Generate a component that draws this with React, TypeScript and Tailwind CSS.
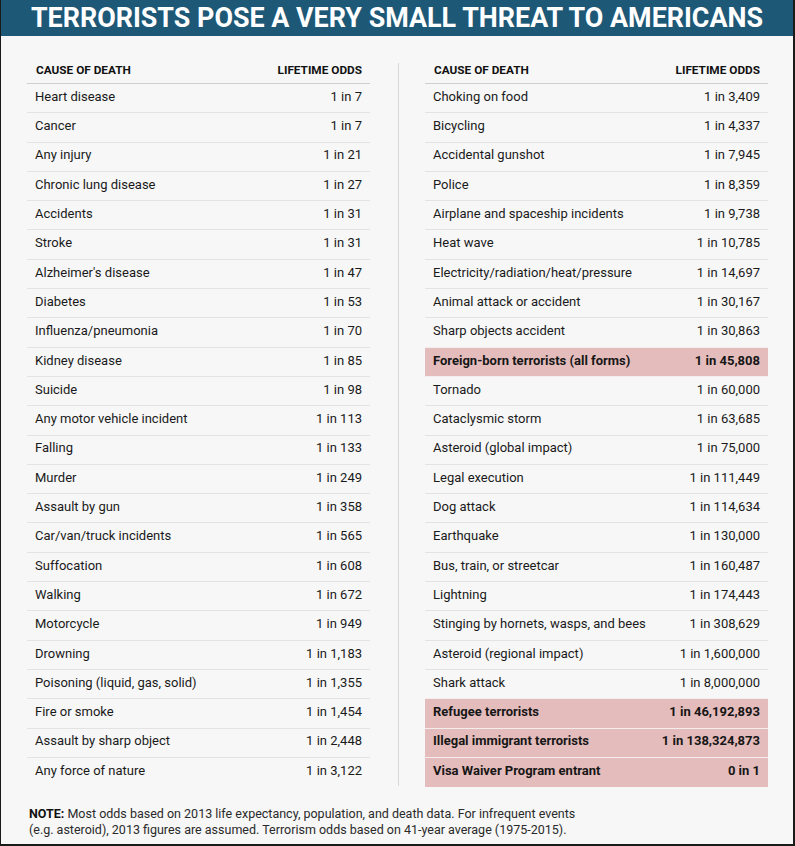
import React from "react";

type Row = [string, string, boolean?];

const left: Row[] = [
  ["Heart disease", "1 in 7"],
  ["Cancer", "1 in 7"],
  ["Any injury", "1 in 21"],
  ["Chronic lung disease", "1 in 27"],
  ["Accidents", "1 in 31"],
  ["Stroke", "1 in 31"],
  ["Alzheimer's disease", "1 in 47"],
  ["Diabetes", "1 in 53"],
  ["Influenza/pneumonia", "1 in 70"],
  ["Kidney disease", "1 in 85"],
  ["Suicide", "1 in 98"],
  ["Any motor vehicle incident", "1 in 113"],
  ["Falling", "1 in 133"],
  ["Murder", "1 in 249"],
  ["Assault by gun", "1 in 358"],
  ["Car/van/truck incidents", "1 in 565"],
  ["Suffocation", "1 in 608"],
  ["Walking", "1 in 672"],
  ["Motorcycle", "1 in 949"],
  ["Drowning", "1 in 1,183"],
  ["Poisoning (liquid, gas, solid)", "1 in 1,355"],
  ["Fire or smoke", "1 in 1,454"],
  ["Assault by sharp object", "1 in 2,448"],
  ["Any force of nature", "1 in 3,122"],
];

const right: Row[] = [
  ["Choking on food", "1 in 3,409"],
  ["Bicycling", "1 in 4,337"],
  ["Accidental gunshot", "1 in 7,945"],
  ["Police", "1 in 8,359"],
  ["Airplane and spaceship incidents", "1 in 9,738"],
  ["Heat wave", "1 in 10,785"],
  ["Electricity/radiation/heat/pressure", "1 in 14,697"],
  ["Animal attack or accident", "1 in 30,167"],
  ["Sharp objects accident", "1 in 30,863"],
  ["Foreign-born terrorists (all forms)", "1 in 45,808", true],
  ["Tornado", "1 in 60,000"],
  ["Cataclysmic storm", "1 in 63,685"],
  ["Asteroid (global impact)", "1 in 75,000"],
  ["Legal execution", "1 in 111,449"],
  ["Dog attack", "1 in 114,634"],
  ["Earthquake", "1 in 130,000"],
  ["Bus, train, or streetcar", "1 in 160,487"],
  ["Lightning", "1 in 174,443"],
  ["Stinging by hornets, wasps, and bees", "1 in 308,629"],
  ["Asteroid (regional impact)", "1 in 1,600,000"],
  ["Shark attack", "1 in 8,000,000"],
  ["Refugee terrorists", "1 in 46,192,893", true],
  ["Illegal immigrant terrorists", "1 in 138,324,873", true],
  ["Visa Waiver Program entrant", "0 in 1", true],
];

function Table({ rows }: { rows: Row[] }) {
  return (
    <div className="w-[343px] flex flex-col">
      <div className="h-[26px] flex items-center justify-between pl-[9px] pr-[8px] border-b border-[#cfcfcf] text-[11.8px] font-bold text-[#111]">
        <span>CAUSE OF DEATH</span>
        <span>LIFETIME ODDS</span>
      </div>
      {rows.map(([name, odds, hl], i) => {
        const last = i === rows.length - 1;
        const nextHl = !last && rows[i + 1][2];
        const border = last
          ? ""
          : hl || nextHl
          ? "border-b border-[#f4eded]"
          : "border-b border-[#e3e3e3]";
        return (
          <div
            key={name}
            className={`h-[29.3px] flex items-center justify-between px-[8px] pb-[3px] text-[13px] ${border} ${
              hl ? "bg-[#e5bcbc] font-bold text-[#161616]" : "text-[#1a1a1a]"
            }`}
          >
            <span>{name}</span>
            <span>{odds}</span>
          </div>
        );
      })}
    </div>
  );
}

export default function App() {
  return (
    <div
      className="w-[795px] h-[846px] bg-[#f7f7f7] border-l border-r-2 border-b-2 border-[#1a1a1a] flex flex-col"
      style={{ fontFamily: "Roboto, 'Liberation Sans', sans-serif" }}
    >
      <div className="h-[36px] bg-[#1d5877] flex items-center justify-center pt-[1px] text-white text-[26.9px] font-bold leading-none">
        TERRORISTS POSE A VERY SMALL THREAT TO AMERICANS
      </div>
      <div className="flex pl-[26px] pt-[22px]">
        <Table rows={left} />
        <div className="ml-[28px] mr-[26px] mt-[5px] w-px h-[723px] bg-[#d9d9d9]" />
        <Table rows={right} />
      </div>
      <div className="pl-[28px] pt-[19px] text-[12.5px] leading-[16px] text-[#2a2a2a]">
        <span className="font-bold text-[#111]">NOTE:</span> Most odds based on 2013 life expectancy, population, and death data. For infrequent events
        <br />
        (e.g. asteroid), 2013 figures are assumed. Terrorism odds based on 41-year average (1975-2015).
      </div>
    </div>
  );
}
